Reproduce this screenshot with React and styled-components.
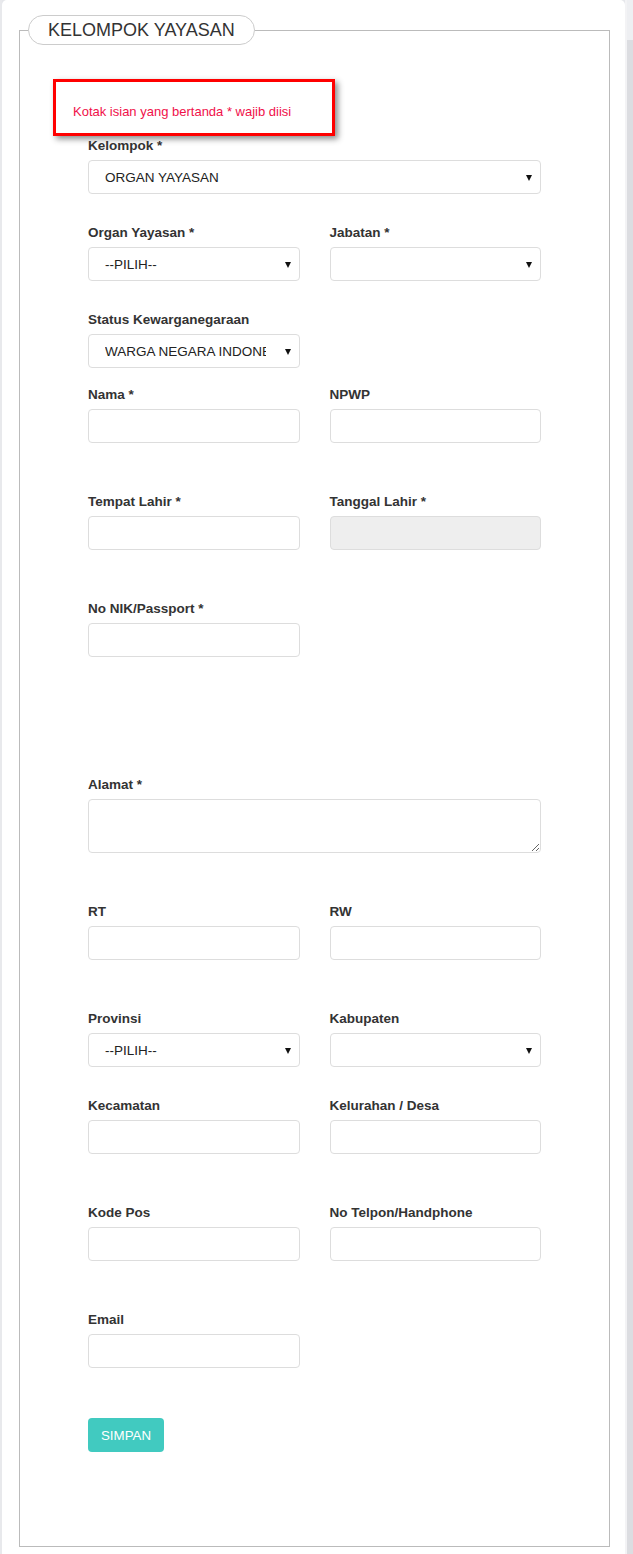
import React from "react";
import styled, { createGlobalStyle } from "styled-components";

const GlobalStyle = createGlobalStyle`
  html, body {
    margin: 0;
    padding: 0;
    background: #e6e7eb;
    font-family: "Liberation Sans", Arial, sans-serif;
  }
`;

const Page = styled.div`
  display: flex;
  height: 1554px;
  overflow: hidden;
`;

const LeftEdge = styled.div`
  width: 2px;
  background: #e8e9ec;
`;

const Card = styled.div`
  width: 623px;
  background: #fff;
  border-radius: 5px 5px 0 0;
  padding-top: 15px;
  box-sizing: border-box;
`;

const Side = styled.div`
  width: 8px;
  display: flex;
  flex-direction: column;
  border-left: 2px solid #f3f3f5;
  box-sizing: border-box;
`;

const SideTop = styled.div`
  height: 40px;
  background: #eeeff2;
`;

const SideRest = styled.div`
  flex: 1;
  background: #dcdde1;
`;

const Fieldset = styled.fieldset`
  margin: 0 15px 0 17px;
  padding: 0;
  border: 1px solid #bbb;
  min-width: 0;
`;

const Legend = styled.legend`
  margin-left: 8px;
  padding: 0 19px;
  height: 30px;
  line-height: 28px;
  box-sizing: border-box;
  border: 1px solid #ccc;
  border-radius: 15px;
  font-size: 18px;
  color: #333;
  background: #fff;
`;

const Body = styled.div`
  padding: 0 68px 94px 68px;
`;

const Notice = styled.div`
  width: 282px;
  box-sizing: border-box;
  margin: 34px 0 0 -35px;
  padding: 22px 17px 14px;
  border: 3px solid #f00;
  box-shadow: 3px 3px 6px rgba(0, 0, 0, 0.45);
  font-size: 13px;
  line-height: 15px;
  color: #f0104a;
`;

const Row = styled.div`
  display: grid;
  grid-template-columns: 1fr 1fr;
  column-gap: 30px;
  margin-bottom: ${({ $space }) => $space}px;
`;

const Field = styled.div`
  display: flex;
  flex-direction: column;
  grid-column: ${({ $full }) => ($full ? "1 / span 2" : "auto")};
`;

const Label = styled.label`
  display: block;
  font-size: 13.5px;
  font-weight: bold;
  line-height: 20px;
  margin-bottom: 4px;
  color: #333;
`;

const Input = styled.input`
  display: block;
  height: 34px;
  box-sizing: border-box;
  border: 1px solid #ddd;
  border-radius: 4px;
  padding: 6px 12px;
  font-family: inherit;
  font-size: 13.5px;
  color: #222;
  background: ${({ readOnly }) => (readOnly ? "#eee" : "#fff")};
  outline: none;
`;

const TextArea = styled.textarea`
  display: block;
  height: 54px;
  box-sizing: border-box;
  border: 1px solid #ddd;
  border-radius: 4px;
  padding: 6px 12px;
  font-family: inherit;
  font-size: 13.5px;
  outline: none;
`;

const SelectWrap = styled.div`
  position: relative;
  height: 34px;

  &::after {
    content: "";
    position: absolute;
    right: 9px;
    top: 15px;
    border-left: 3.5px solid transparent;
    border-right: 3.5px solid transparent;
    border-top: 6px solid #111;
    pointer-events: none;
  }
`;

const Select = styled.select`
  display: block;
  appearance: none;
  width: 100%;
  height: 34px;
  box-sizing: border-box;
  border: 1px solid #ddd;
  border-radius: 4px;
  padding: 0 33px 0 16px;
  font-family: inherit;
  font-size: 13.5px;
  color: #222;
  background: #fff;
  outline: none;
`;

const Button = styled.button`
  display: block;
  margin-top: 50px;
  height: 34px;
  padding: 0 13px;
  border: none;
  border-radius: 4px;
  background: #41cac0;
  color: #fff;
  font-family: inherit;
  font-size: 13.3px;
  cursor: pointer;
`;

function Dropdown({ value, options = [] }) {
  return (
    <SelectWrap>
      <Select defaultValue={value}>
        {options.map((o) => (
          <option key={o}>{o}</option>
        ))}
      </Select>
    </SelectWrap>
  );
}

export default function App() {
  return (
    <>
      <GlobalStyle />
      <Page>
        <LeftEdge />
        <Card>
          <Fieldset>
            <Legend>KELOMPOK YAYASAN</Legend>
            <Body>
              <Notice>Kotak isian yang bertanda * wajib diisi</Notice>

              <Row $space={29}>
                <Field $full>
                  <Label>Kelompok *</Label>
                  <Dropdown value="ORGAN YAYASAN" options={["ORGAN YAYASAN"]} />
                </Field>
              </Row>

              <Row $space={29}>
                <Field>
                  <Label>Organ Yayasan *</Label>
                  <Dropdown value="--PILIH--" options={["--PILIH--"]} />
                </Field>
                <Field>
                  <Label>Jabatan *</Label>
                  <Dropdown value="" options={[""]} />
                </Field>
              </Row>

              <Row $space={17}>
                <Field>
                  <Label>Status Kewarganegaraan</Label>
                  <Dropdown
                    value="WARGA NEGARA INDONESIA"
                    options={["WARGA NEGARA INDONESIA"]}
                  />
                </Field>
              </Row>

              <Row $space={49}>
                <Field>
                  <Label>Nama *</Label>
                  <Input />
                </Field>
                <Field>
                  <Label>NPWP</Label>
                  <Input />
                </Field>
              </Row>

              <Row $space={49}>
                <Field>
                  <Label>Tempat Lahir *</Label>
                  <Input />
                </Field>
                <Field>
                  <Label>Tanggal Lahir *</Label>
                  <Input readOnly />
                </Field>
              </Row>

              <Row $space={118}>
                <Field>
                  <Label>No NIK/Passport *</Label>
                  <Input />
                </Field>
              </Row>

              <Row $space={49}>
                <Field $full>
                  <Label>Alamat *</Label>
                  <TextArea />
                </Field>
              </Row>

              <Row $space={49}>
                <Field>
                  <Label>RT</Label>
                  <Input />
                </Field>
                <Field>
                  <Label>RW</Label>
                  <Input />
                </Field>
              </Row>

              <Row $space={29}>
                <Field>
                  <Label>Provinsi</Label>
                  <Dropdown value="--PILIH--" options={["--PILIH--"]} />
                </Field>
                <Field>
                  <Label>Kabupaten</Label>
                  <Dropdown value="" options={[""]} />
                </Field>
              </Row>

              <Row $space={49}>
                <Field>
                  <Label>Kecamatan</Label>
                  <Input />
                </Field>
                <Field>
                  <Label>Kelurahan / Desa</Label>
                  <Input />
                </Field>
              </Row>

              <Row $space={49}>
                <Field>
                  <Label>Kode Pos</Label>
                  <Input />
                </Field>
                <Field>
                  <Label>No Telpon/Handphone</Label>
                  <Input />
                </Field>
              </Row>

              <Row $space={0}>
                <Field>
                  <Label>Email</Label>
                  <Input />
                </Field>
              </Row>

              <Button>SIMPAN</Button>
            </Body>
          </Fieldset>
        </Card>
        <Side>
          <SideTop />
          <SideRest />
        </Side>
      </Page>
    </>
  );
}
